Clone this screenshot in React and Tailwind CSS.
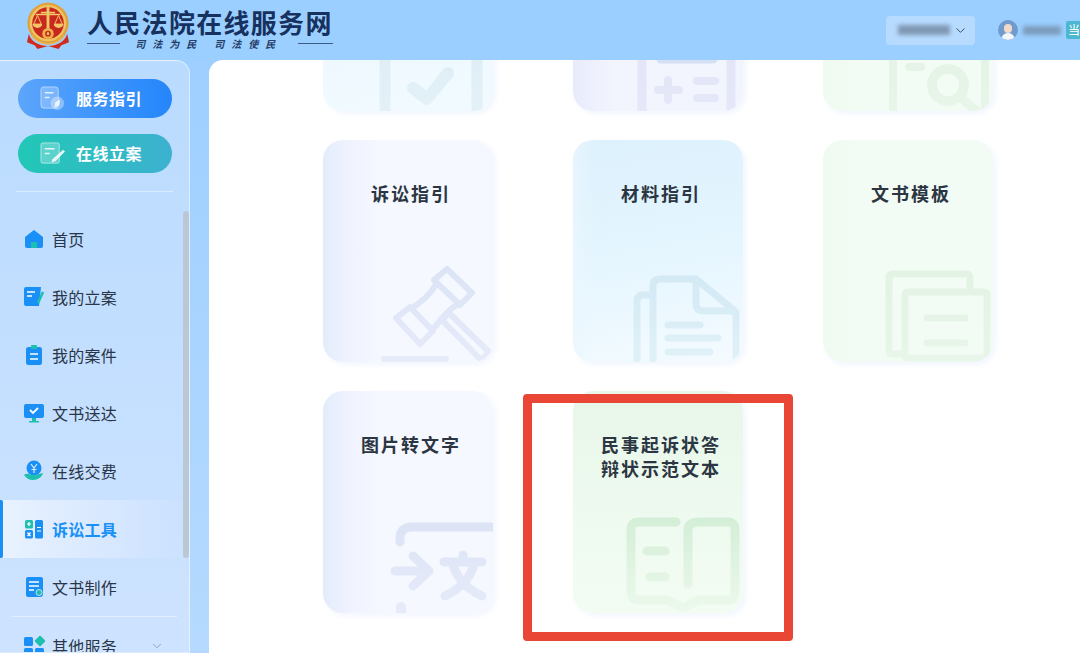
import React from 'react';
import { ChevronDown } from 'lucide-react';

const cjk = "font-['Noto_Sans_CJK_SC','Noto_Sans',sans-serif]";

const CourtLogo = () => (
  <svg width="44" height="50" viewBox="0 0 46 52" className="mb-[8px]">
    <circle cx="23" cy="23" r="21.5" fill="#e0a23c" />
    <circle cx="23" cy="23" r="19" fill="#f0c463" />
    <circle cx="23" cy="23" r="16.5" fill="#c9281e" />
    <path d="M21.5 5h3v6h6v2h-6v20h-3V13h-6v-2h6z" fill="#f2c768" />
    <path d="M10 14h26" stroke="#f2c768" strokeWidth="1.5" />
    <path d="M12 15l-4 9h8zM34 15l-4 9h8z" fill="none" stroke="#f2c768" strokeWidth="1" />
    <path d="M7 24a5 4 0 0 0 10 0zM29 24a5 4 0 0 0 10 0z" fill="#f2c768" />
    <circle cx="23" cy="34" r="6" fill="#e8b14c" />
    <circle cx="23" cy="34" r="3" fill="#c9281e" />
    <circle cx="23" cy="34" r="1.4" fill="#f2c768" />
    <path d="M3 34c2 8 9 12 20 13 11-1 18-5 20-13l2 9-8 3-3 4-11-3-11 3-3-4-8-3z" fill="#d12a1c" />
    <path d="M6 36c4 6 10 8 17 9 7-1 13-3 17-9" fill="none" stroke="#eeb44f" strokeWidth="1.5" />
  </svg>
);

const Gavel = ({ id }) => (
  <g fill="none" stroke={`url(#${id})`} strokeWidth="6" strokeLinejoin="round" strokeLinecap="round">
    <path d="M124 129l25 24-12 12-26-25z" />
    <path d="M87 167l23 24-13 13-24-26z" />
    <path d="M112 146c-5 8-11 14-20 20M136 163c-9 6-17 14-24 24" />
    <path d="M119 180l7-7 40 39-8 8z" />
    <path d="M61 219h62" />
  </g>
);

const Papers = ({ id }) => (
  <g fill="none" stroke={`url(#${id})`} strokeWidth="7" strokeLinejoin="round" strokeLinecap="round">
    <path d="M80 224V146q0-7 7-7h36l40 33v52" />
    <path d="M123 141v22q0 8 8 8h30" />
    <path d="M80 155H70q-6 0-6 6v63" />
    <path d="M95 185h32M95 198h50M95 212h42" />
  </g>
);

const Sheets = ({ id }) => (
  <g fill="none" stroke={`url(#${id})`} strokeWidth="7" strokeLinejoin="round" strokeLinecap="round">
    <path d="M147 150v-12q0-4-4-4H70q-4 0-4 4v72q0 4 4 4h10" />
    <path d="M85 152h76q3 0 3 3v63H85q-3 0-3-3v-60q0-3 3-3z" />
    <path d="M104 178h38M104 203h38" />
  </g>
);

const Translate = ({ id }) => (
  <g fill="none" stroke={`url(#${id})`} strokeWidth="9" strokeLinejoin="round" strokeLinecap="round">
    <path d="M77 151v-3q0-12 12-12h85" />
    <path d="M72 180h32M90 165l16 15-16 15" />
    <path d="M121 171h38M140 164v7M130 174c4 13 14 24 29 31M151 174c-4 13-14 24-29 31" />
    <path d="M78 216v8" strokeWidth="10" />
  </g>
);

const Book = ({ id }) => (
  <g fill="none" stroke={`url(#${id})`} strokeWidth="9" strokeLinejoin="round" strokeLinecap="round">
    <path d="M103 131H66q-8 0-8 8v62q0 8 8 8h28l16 8 16-8h29q7 0 7-8v-62q0-8-7-8h-28q-12 0-12 8v54" />
    <path d="M74 160h18M77 186h15" />
  </g>
);

const Check = ({ id }) => (
  <g fill="none" stroke={`url(#${id})`} strokeLinecap="round" strokeLinejoin="round">
    <path d="M62 160v70M154 160v70" strokeWidth="11" strokeLinecap="butt" />
    <path d="M90 199l14 11 21-26" strokeWidth="12" />
  </g>
);

const Calc = ({ id }) => (
  <g fill="none" stroke={`url(#${id})`} strokeLinecap="round">
    <path d="M69 160v70M158 160v70" strokeWidth="9" strokeLinecap="butt" />
    <path d="M88 170h52" strokeWidth="9" stroke="#d5e0f4" />
    <path d="M85 201h21M95 191v20" strokeWidth="8" />
    <path d="M124 192h18M124 209h18" strokeWidth="8" />
  </g>
);

const Finder = ({ id }) => (
  <g fill="none" stroke={`url(#${id})`} strokeLinecap="round">
    <path d="M70 160v70M162 160v70" strokeWidth="8" strokeLinecap="butt" />
    <path d="M86 178h12" strokeWidth="8" />
    <circle cx="125" cy="196" r="16" strokeWidth="10" />
    <path d="M138 209l16 13" strokeWidth="9" />
  </g>
);

const tones = {
  blue: { card: 'bg-[linear-gradient(90deg,#e3ecfb_0,#edf1fe_20px,#f0f3fe_26px,#f5f8ff_60px)]', from: '#dbe3f5', to: '#e6ebf9' },
  violet: { card: 'bg-[linear-gradient(90deg,#e7ebfa_0,#eef0fd_20px,#f3f5fe_50px)]', from: '#dfe3f5', to: '#e5e8f8' },
  sky: { card: 'bg-[linear-gradient(90deg,rgba(235,246,254,0.7)_0,rgba(235,246,254,0)_22px),linear-gradient(170deg,#ddf1fd_0%,#e3f5fe_45%,#f4fbff_100%)]', from: '#d1e8f4', to: '#e1f1f8' },
  ice: { card: 'bg-[linear-gradient(170deg,#e8f6fe_0%,#f1faff_100%)]', from: '#dcecf5', to: '#e3f1f7' },
  green: { card: 'bg-[linear-gradient(90deg,#effaf0_0,#f3fcf4_40px)]', from: '#e2f2e3', to: '#e8f5e9' },
  mint: { card: 'bg-[linear-gradient(180deg,#e8f7ea_0%,#f3fcf3_100%)]', from: '#d3eed6', to: '#ecf9ec' },
};

const cards = [
  { id: 'c1', tone: 'ice', Icon: Check },
  { id: 'c2', tone: 'violet', Icon: Calc },
  { id: 'c3', tone: 'green', Icon: Finder },
  { id: 'c4', tone: 'blue', Icon: Gavel, title: ['诉讼指引'] },
  { id: 'c5', tone: 'sky', Icon: Papers, title: ['材料指引'] },
  { id: 'c6', tone: 'green', Icon: Sheets, title: ['文书模板'] },
  { id: 'c7', tone: 'blue', Icon: Translate, title: ['图片转文字'] },
  { id: 'c8', tone: 'mint', Icon: Book, title: ['民事起诉状答', '辩状示范文本'] },
];

const ToolCard = ({ id, tone, Icon, title = [] }) => {
  const t = tones[tone];
  return (
    <div className={`relative h-[222px] w-[170px] overflow-hidden rounded-[20px] pl-[6px] pt-[41px] text-center shadow-[3px_3px_5px_rgba(232,238,255,0.55)] ${t.card}`}>
      {title.map((line) => (
        <div key={line} className="text-[18px] font-bold leading-[24px] tracking-[2px] text-[#2b3642]">{line}</div>
      ))}
      <svg className="absolute bottom-0 right-0" width="120" height="102" viewBox="50 120 120 102">
        <defs>
          <linearGradient id={id} gradientUnits="userSpaceOnUse" x1="0" y1="125" x2="0" y2="222">
            <stop offset="0" stopColor={t.from} />
            <stop offset="1" stopColor={t.to} />
          </linearGradient>
        </defs>
        <Icon id={id} />
      </svg>
    </div>
  );
};

const NavIcon = ({ name }) => {
  const blue = '#1a8ff5';
  const teal = '#1dbfae';
  if (name === 'home') return (
    <svg width="22" height="22" viewBox="0 0 22 22">
      <path d="M2 9l9-7 9 7v9q0 2-2 2H4q-2 0-2-2z" fill={blue} />
      <rect x="8" y="14" width="6" height="6" fill={teal} />
    </svg>
  );
  if (name === 'filing') return (
    <svg width="22" height="22" viewBox="0 0 22 22">
      <path d="M3 1h15l-2 19H3q-2 0-2-2V3q0-2 2-2z" fill={blue} />
      <path d="M4 6h8M4 10h5" stroke="#fff" strokeWidth="1.6" />
      <path d="M20 6l-5 11" stroke={teal} strokeWidth="2.6" />
    </svg>
  );
  if (name === 'case') return (
    <svg width="22" height="22" viewBox="0 0 22 22">
      <rect x="3" y="3" width="16" height="18" rx="2.5" fill={blue} />
      <rect x="8" y="1" width="6" height="4" rx="1" fill={teal} />
      <path d="M7 10h8M7 15h8" stroke="#fff" strokeWidth="1.6" />
    </svg>
  );
  if (name === 'deliver') return (
    <svg width="22" height="22" viewBox="0 0 22 22">
      <rect x="1" y="2" width="20" height="14" rx="2" fill={blue} />
      <path d="M7 8l3 3 5-5" fill="none" stroke="#fff" strokeWidth="1.8" />
      <path d="M9 16h4v3H9zM6 19h10v1.5H6z" fill={teal} />
    </svg>
  );
  if (name === 'pay') return (
    <svg width="22" height="22" viewBox="0 0 22 22">
      <circle cx="11" cy="8" r="7.5" fill={blue} />
      <path d="M8 4l3 4 3-4M11 8v5M8.5 9.5h5" fill="none" stroke="#d9ecff" strokeWidth="1.2" />
      <path d="M1 15c3-2 5-1 7 0h4l8-2c-1 4-5 7-10 7-4 0-7-2-9-5z" fill={teal} />
    </svg>
  );
  if (name === 'tools') return (
    <svg width="22" height="22" viewBox="0 0 22 22">
      <rect x="2" y="2" width="8" height="8.5" rx="1.5" fill={teal} />
      <rect x="2" y="12" width="8" height="8.5" rx="1.5" fill={blue} />
      <rect x="12" y="2" width="8" height="18.5" rx="1.5" fill={blue} />
      <path d="M4 6h4M6 4v4M4.5 14.5l3 3.5M7.5 14.5l-3 3.5M14 9.5h4M14 13h4" stroke="#fff" strokeWidth="1.2" />
    </svg>
  );
  if (name === 'make') return (
    <svg width="22" height="22" viewBox="0 0 22 22">
      <path d="M5 1h13q2 0 2 2v15q0 3-3 3H5q-2 0-2-2V3q0-2 2-2z" fill={blue} />
      <path d="M6 6h10M6 10h10M6 14h5" stroke="#fff" strokeWidth="1.4" />
      <circle cx="16" cy="16.5" r="3" fill={teal} stroke="#bfe2ff" strokeWidth="1" />
    </svg>
  );
  return (
    <svg width="22" height="22" viewBox="0 0 22 22">
      <rect x="1" y="2" width="9" height="9" rx="1.5" fill={blue} />
      <rect x="1" y="13" width="9" height="9" rx="1.5" fill={blue} />
      <rect x="12" y="13" width="9" height="9" rx="1.5" fill={blue} />
      <rect x="13" y="2" width="8" height="8" rx="1" fill={teal} transform="rotate(45 17 6)" />
    </svg>
  );
};

const navItems = [
  { name: 'home', label: '首页' },
  { name: 'filing', label: '我的立案' },
  { name: 'case', label: '我的案件' },
  { name: 'deliver', label: '文书送达' },
  { name: 'pay', label: '在线交费' },
  { name: 'tools', label: '诉讼工具', active: true },
  { name: 'make', label: '文书制作' },
];

const GuideIcon = () => (
  <svg width="27" height="27" viewBox="0 0 28 28" fill="none">
    <rect x="2" y="2" width="18" height="22" rx="3" fill="#fff" fillOpacity="0.25" stroke="#fff" strokeOpacity="0.5" />
    <path d="M6 8h9M6 13h5" stroke="#fff" strokeOpacity="0.8" strokeWidth="1.5" />
    <circle cx="19" cy="19" r="7" fill="#fff" fillOpacity="0.35" />
    <path d="M22 15l-5 3-1 5 5-2z" fill="#fff" fillOpacity="0.8" />
  </svg>
);

const FilingIcon = () => (
  <svg width="27" height="27" viewBox="0 0 28 28" fill="none">
    <rect x="2" y="3" width="19" height="21" rx="2" fill="#fff" fillOpacity="0.25" stroke="#fff" strokeOpacity="0.55" />
    <path d="M6 9h10M6 14h5" stroke="#fff" strokeOpacity="0.85" strokeWidth="1.6" />
    <path d="M25 10l-11 10-1 3 4-1 10-10z" fill="#fff" fillOpacity="0.85" />
  </svg>
);

const SideButton = ({ tone, Icon, children }) => (
  <div className={`flex h-[39px] w-[154px] items-center rounded-full pl-[21px] text-[16px] font-bold tracking-[0.5px] text-white ${tone}`}>
    <span className="flex w-[37px] shrink-0"><Icon /></span>
    <span className="-mt-[2px]">{children}</span>
  </div>
);

export default function App() {
  return (
    <div className={`relative flex h-[653px] w-[1080px] flex-col overflow-hidden bg-[linear-gradient(180deg,#9bceff,#b6daff)] ${cjk}`}>
      <header className="flex h-[60px] shrink-0 items-center bg-[#9bcfff] pl-[26px]">
        <CourtLogo />
        <div className="-mt-[5px] ml-[17px] flex flex-col">
          <div className="text-[26px] font-bold leading-[32px] tracking-[1.3px] text-[#17315f]">人民法院在线服务网</div>
          <div className="flex items-center justify-between text-[10px] font-bold italic leading-[12px] text-[#27406b]">
            <span className="h-px w-[33px] bg-[#3f5c8a]" />
            <span className="flex gap-[11px] tracking-[7px]"><span>司法为民</span><span>司法使民</span></span>
            <span className="h-px w-[35px] bg-[#3f5c8a]" />
          </div>
        </div>
        <div className="ml-auto flex items-center">
          <div className="flex h-[29px] w-[89px] items-center rounded-[4px] bg-[#b7daff] pl-[12px]">
            <div className="h-[10px] w-[52px] bg-[#7f98b3] blur-[2px]" />
            <ChevronDown size={15} strokeWidth={1.5} className="ml-[3px] text-[#3c4a5c]" />
          </div>
          <div className="relative ml-[23px] flex h-[20px] w-[20px] items-end justify-center overflow-hidden rounded-full bg-[#6f9ccd]">
            <div className="absolute top-[4px] h-[9px] w-[8px] rounded-full bg-[#f3d9c9]" />
            <div className="h-[7px] w-[14px] rounded-t-full bg-[#f3f6fa]" />
          </div>
          <div className="ml-[5px] h-[9px] w-[38px] bg-[#7c9cbc] blur-[2px]" />
          <div className="ml-[5px] h-[18px] w-[14px] overflow-hidden rounded-l-[2px] bg-[#4db7d2] pl-[2px] text-[12px] leading-[18px] text-white">当</div>
        </div>
      </header>

      <div className="flex min-h-0 flex-1 gap-[19px]">
        <aside className="relative w-[190px] shrink-0 overflow-hidden rounded-tr-[14px] border border-l-0 border-white/50 bg-[linear-gradient(180deg,#b9dbff,#cee3ff)]">
          <div className="flex flex-col gap-[16px] pl-[18px] pt-[18px]">
            <SideButton tone="bg-[linear-gradient(90deg,#5ca5fb,#2486fb)]" Icon={GuideIcon}>服务指引</SideButton>
            <SideButton tone="bg-[linear-gradient(90deg,#21c8b6,#3db1d0)]" Icon={FilingIcon}>在线立案</SideButton>
          </div>
          <div className="mx-[16px] mt-[18px] h-px bg-white/45" />
          <nav className="mt-[18px] flex flex-col">
            {navItems.map((item) => (
              <div
                key={item.name}
                className={`relative flex h-[58px] items-center gap-[7px] pl-[23px] text-[16px] tracking-[0.25px] ${item.active ? 'bg-[linear-gradient(90deg,#e9f2ff,#cfe3ff_85%,transparent)] font-bold text-[#1890f5]' : 'text-[#2a3648]'}`}
              >
                {item.active && <span className="absolute bottom-0 left-0 top-0 w-[3px] rounded-r-[2px] bg-[#1890f5]" />}
                <NavIcon name={item.name} />
                {item.label}
              </div>
            ))}
            <div className="mx-[12px] h-px bg-white/45" />
            <div className="flex h-[58px] items-center gap-[7px] pl-[23px] text-[16px] tracking-[0.25px] text-[#2a3648]">
              <NavIcon name="other" />
              其他服务
              <ChevronDown size={14} strokeWidth={1.5} className="ml-[26px] text-[#8b98a8]" />
            </div>
          </nav>
          <div className="absolute right-0 top-[150px] h-[347px] w-[6px] rounded-full bg-[#bcc7d6]" />
        </aside>

        <main className="min-w-0 flex-1 overflow-hidden rounded-tl-[14px] bg-white pl-[114px]">
          <div className="-mt-[171px] grid grid-cols-[repeat(3,170px)] gap-x-[80px] gap-y-[29px]">
            {cards.map((card) => (
              <ToolCard key={card.id} {...card} />
            ))}
          </div>
        </main>
      </div>

      {/* annotation drawn over the screenshot */}
      <div className="absolute left-[523px] top-[394px] h-[247px] w-[270px] rounded-[4px] border-[9px] border-[#e94635]" />
    </div>
  );
}
